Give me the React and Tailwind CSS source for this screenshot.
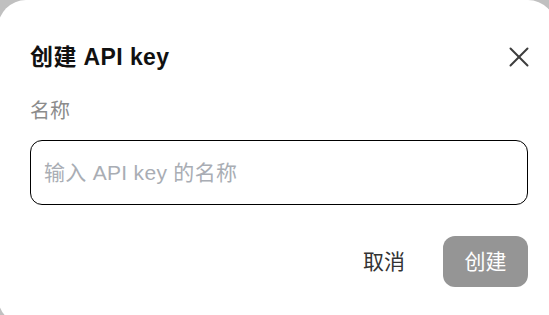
import React from 'react';

const font = { fontFamily: '"Liberation Sans", "Noto Sans CJK SC", sans-serif' };

export default function App() {
    return (
        <div className="w-[549px] h-[315px] overflow-hidden bg-[#c0c0c0]" style={font}>
            {/* --- DIALOG --- */}
            <div className="-ml-[2px] w-[558px] h-[325px] bg-white rounded-[28px] pl-[32px] pr-[28px] pt-[43px]">
                <div className="h-[28px] flex items-center justify-between">
                    <h1 className="text-[23px] leading-[28px] font-bold tracking-[0.4px] text-[#111]">创建 API key</h1>
                    <button className="w-[22px] h-[22px] flex items-center justify-center -mr-[2px]">
                        <svg width="20" height="20" viewBox="0 0 20 20" fill="none" stroke="#3d3d3d" strokeWidth="2" strokeLinecap="round">
                            <path d="M1.5 1.5 18.5 18.5" />
                            <path d="M18.5 1.5 1.5 18.5" />
                        </svg>
                    </button>
                </div>

                <label className="block mt-[28px] text-[20px] leading-[24px] text-[#8c8c8c]">名称</label>

                <input
                    className="mt-[17px] w-full h-[65px] rounded-[12px] border-[1.5px] border-[#000] px-[13px] text-[21px] tracking-[0.3px] outline-none placeholder:text-[#a9adb4]"
                    placeholder="输入 API key 的名称"
                />

                <div className="mt-[31px] flex items-center justify-end gap-[38px]">
                    <button className="text-[21px] text-[#333]">取消</button>
                    <button className="w-[85px] h-[51px] rounded-[12px] bg-[#959595] text-white text-[21px]">创建</button>
                </div>
            </div>
        </div>
    );
}
